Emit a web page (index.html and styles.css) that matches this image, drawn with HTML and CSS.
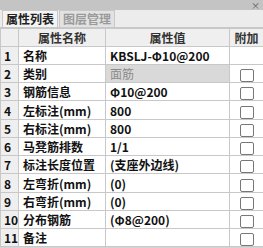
FILE: index.html
```html
<!DOCTYPE html>
<html lang="zh">
<head>
    <meta charset="UTF-8">
    <title>属性列表</title>
    <link rel="stylesheet" href="styles.css">
</head>
<body>
    <div class="panel">
        <div class="title-bar"><span class="close">×</span></div>
        <div class="tabs">
            <div class="tab active">属性列表</div>
            <div class="tab">图层管理</div>
        </div>
        <table class="props">
            <thead>
                <tr><th class="num"></th><th class="name">属性名称</th><th class="value">属性值</th><th class="extra">附加</th></tr>
            </thead>
            <tbody>
                <tr><td class="num">1</td><td>名称</td><td>KBSLJ-Φ10@200</td><td class="extra"></td></tr>
                <tr><td class="num">2</td><td>类别</td><td class="disabled">面筋</td><td class="extra"><span class="check"></span></td></tr>
                <tr><td class="num">3</td><td>钢筋信息</td><td>Φ10@200</td><td class="extra"><span class="check"></span></td></tr>
                <tr><td class="num">4</td><td>左标注(mm)</td><td>800</td><td class="extra"><span class="check"></span></td></tr>
                <tr><td class="num">5</td><td>右标注(mm)</td><td>800</td><td class="extra"><span class="check"></span></td></tr>
                <tr><td class="num">6</td><td>马凳筋排数</td><td>1/1</td><td class="extra"><span class="check"></span></td></tr>
                <tr><td class="num">7</td><td>标注长度位置</td><td>(支座外边线)</td><td class="extra"><span class="check"></span></td></tr>
                <tr><td class="num">8</td><td>左弯折(mm)</td><td>(0)</td><td class="extra"><span class="check"></span></td></tr>
                <tr><td class="num">9</td><td>右弯折(mm)</td><td>(0)</td><td class="extra"><span class="check"></span></td></tr>
                <tr><td class="num">10</td><td>分布钢筋</td><td>(Φ8@200)</td><td class="extra"><span class="check"></span></td></tr>
                <tr><td class="num">11</td><td>备注</td><td></td><td class="extra"><span class="check"></span></td></tr>
            </tbody>
        </table>
    </div>
</body>
</html>
```

FILE: styles.css
```css
body {
    margin: 0;
    background-color: #d4d4d4;
    font-family: "Noto Sans CJK SC", "Liberation Sans", sans-serif;
    font-size: 12px;
    color: #111;
}

.panel {
    width: 263px;
    height: 248px;
    background-color: #d4d4d4;
}

.title-bar {
    height: 10px;
    background-color: #c4c4c4;
    display: flex;
    justify-content: flex-end;
    align-items: center;
}

.close {
    font-size: 9px;
    line-height: 9px;
    color: #555;
    margin-right: 3px;
}

.tabs {
    height: 17px;
    display: flex;
    align-items: flex-end;
    background-color: #ececec;
    border-bottom: 1px solid #c8c8c8;
    padding-left: 2px;
    gap: 1px;
}

.tab {
    height: 16px;
    line-height: 16px;
    padding: 0 3px;
    font-weight: bold;
    color: #9a9a9a;
    background-color: #e2e2e2;
    border: 1px solid #c8c8c8;
    border-bottom: none;
}

.tab.active {
    color: #222;
    background-color: #f4f4f4;
}

.props {
    border-collapse: collapse;
    table-layout: fixed;
    width: 263px;
}

.props th,
.props td {
    height: 17px;
    padding: 0 0 0 4px;
    border: 1px solid #c8c8c8;
    text-align: left;
    white-space: nowrap;
    overflow: hidden;
    font-weight: bold;
    background-color: #fff;
}

.props th {
    height: 15px;
    background-color: #efefef;
    text-align: center;
    padding: 0;
    color: #333;
}

.props th.num { width: 17px; }
.props th.name { width: 86px; }
.props th.value { width: 123px; }
.props th.extra { border-right: none; }

.props td.num {
    background-color: #efefef;
    padding: 0 0 0 3px;
}

.props td.disabled {
    background-color: #d9d9d9;
    color: #8a8a8a;
    font-weight: normal;
}

.props td.extra {
    text-align: center;
    padding: 0;
    border-right: none;
}

.check {
    display: inline-block;
    width: 12px;
    height: 11px;
    border: 1px solid #777;
    border-radius: 2px;
    vertical-align: middle;
    margin-left: 1px;
}
```
